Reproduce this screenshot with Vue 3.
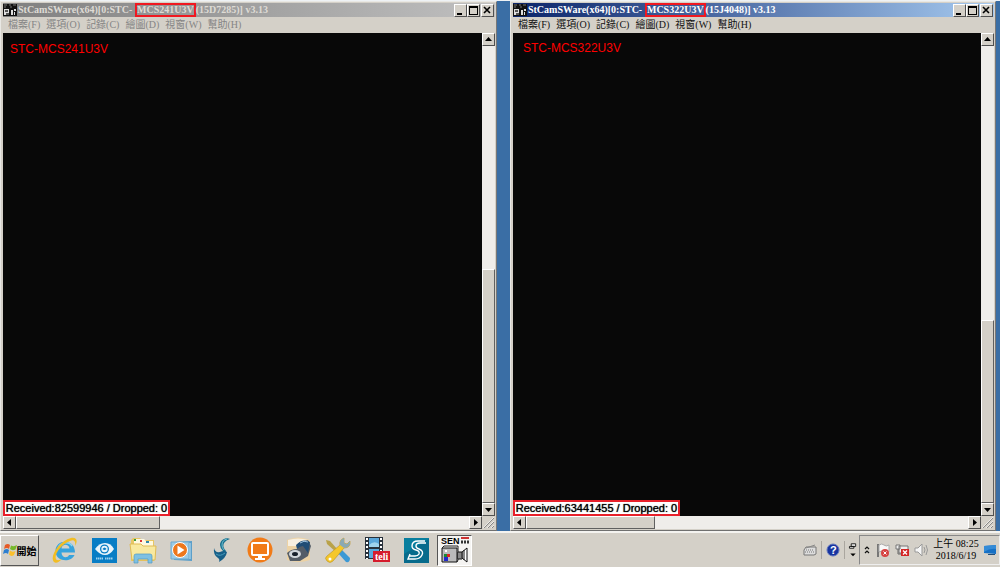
<script setup>
const menus = ['檔案(F)', '選項(O)', '記錄(C)', '繪圖(D)', '視窗(W)', '幫助(H)']
const windows = [
  { id: 'a', active: false, model: 'MCS241U3V', serial: '15D7285', received: '82599946', vTop: 48.8, hWidth: 31.8 },
  { id: 'b', active: true, model: 'MCS322U3V', serial: '15J4048', received: '63441455', vTop: 60, hWidth: 29.3 },
]
</script>

<template>
  <div class="screen">
    <main class="desktop">
      <section v-for="w in windows" :key="w.id" class="window" :class="[w.id, { active: w.active }]">
        <header class="titlebar">
          <svg class="app-icon" viewBox="0 0 14 12" aria-hidden="true">
            <path d="M0 0h14v12H0z" fill="#111" />
            <path d="M1 1h3M6 1h2M10 1h3M1 3h2M7 3h2" stroke="#777" />
            <path d="M1 5h5v6H1zM8 6h2v5H8zM11 5h2v2h-2zM11 8h1v3h-1z" fill="#ddd" />
            <path d="M2 6h3v2H2zM3 9h3v2H3z" fill="#555" />
          </svg>
          <h1 class="title"><span class="lead">StCamSWare(x64)[0:STC-</span><span class="mark">{{ w.model }}</span><span>({{ w.serial }})] v3.13</span></h1>
          <div class="controls">
            <button class="key" aria-label="Minimize"><svg viewBox="0 0 9 9"><path d="M1 7h5v2H1z" /></svg></button>
            <button class="key" aria-label="Maximize"><svg viewBox="0 0 9 9"><path d="M0 0h9v9H0zM1 2v6h7V2z" fill-rule="evenodd" /></svg></button>
            <button class="key close" aria-label="Close"><svg viewBox="0 0 9 9"><path d="M1 1l6 6M7 1L1 7" stroke="#000" stroke-width="1.6" /></svg></button>
          </div>
        </header>
        <nav class="menubar">
          <button v-for="m in menus" :key="m">{{ m }}</button>
        </nav>
        <div class="body">
          <div class="view">
            <p class="camera">STC-{{ w.model }}</p>
            <p class="status">Received:{{ w.received }} / Dropped: 0</p>
          </div>
          <div class="vbar">
            <button class="key" aria-label="Scroll up"><svg viewBox="0 0 9 9"><path d="M1 6l3.5-4L8 6z" /></svg></button>
            <div class="track"><div class="thumb" :style="{ marginTop: 'auto', height: 100 - w.vTop + '%' }"></div></div>
            <button class="key" aria-label="Scroll down"><svg viewBox="0 0 9 9"><path d="M1 3l3.5 4L8 3z" /></svg></button>
          </div>
          <div class="hbar">
            <button class="key" aria-label="Scroll left"><svg viewBox="0 0 9 9"><path d="M6 1L2 4.500L6 8z" /></svg></button>
            <div class="track"><div class="thumb" :style="{ width: w.hWidth + '%' }"></div></div>
            <button class="key" aria-label="Scroll right"><svg viewBox="0 0 9 9"><path d="M3 1l4 3.500L3 8z" /></svg></button>
          </div>
          <svg class="grip" viewBox="0 0 13 13" aria-hidden="true">
            <path d="M2 12L12 2M6 12l6-6M10 12l2-2" stroke="#888" />
            <path d="M1 12L12 1M5 12l7-7M9 12l3-3" stroke="#fff" stroke-width=".6" />
          </svg>
        </div>
      </section>
    </main>

    <footer class="taskbar">
      <button class="start">
        <svg viewBox="0 0 14 14" aria-hidden="true">
          <path d="M2 2q3-2 5 0L6 6Q4 4 1 6z" fill="#e65b27" />
          <path d="M8 2.500q3 1.500 6-.5l-1.500 4.500Q9 8 7 6z" fill="#76b82a" />
          <path d="M1 7q3-2 5 0l-1 4Q3 9 0 11z" fill="#2d7fd0" />
          <path d="M7 7.500q2 2 5.500.5L11 12q-3 2-5-.5z" fill="#fbc02d" />
        </svg>開始
      </button>
      <div class="apps">
        <button aria-label="Internet Explorer">
          <svg viewBox="0 0 28 28">
            <path fill-rule="evenodd" d="M23.500 19C20 27 4.500 26 4.500 15 4.500 3 24 2 24 16.500H10.500c0 5.500 6 6 7.500 2.500zM10.500 12.500h8c-.5-5-7.500-5-8 0z" fill="#36a3dd" />
            <path d="M7 12c2-6 11-7 14-2" fill="none" stroke="#8bd6f5" stroke-width="1.500" />
            <path d="M3 26C-2 21 8 5 20 2c6-1 7 3 4 8 1-5-1-7-5-5C9 9 3 19 5 23c1 2 4 1 6 0-3 3-6 5-8 3z" fill="#f2bd23" />
          </svg>
        </button>
        <button aria-label="Eye viewer">
          <svg viewBox="0 0 28 28">
            <path d="M2 2h25v25H2z" fill="#087dc5" />
            <path d="M5 13Q9 7 15 7t9 6q-4 6-9 6t-10-6z" fill="#eaf5fb" />
            <circle cx="14.500" cy="13" r="4.500" fill="#087dc5" />
            <circle cx="14.500" cy="13" r="3.200" fill="#eaf5fb" />
            <path d="M12.500 13q2-3 4 0-2 2-4 0z" fill="#087dc5" />
            <path d="M6 22.500h7M15 22.500h8" stroke="#9ed2ee" stroke-width="2" stroke-dasharray="1.500 .5" />
          </svg>
        </button>
        <button aria-label="File Explorer">
          <svg viewBox="0 0 28 28">
            <path d="M2 4l2-2h7l2 2h12v21H2z" fill="#e8c765" />
            <path d="M5 3h10l2 2h7v5H5z" fill="#fff9df" />
            <path d="M5 4h2" stroke="#3a9d3a" stroke-width="2" /><path d="M11 5h2" stroke="#d33" stroke-width="2" /><path d="M17 6h3" stroke="#38a" stroke-width="2" />
            <path d="M1 8h11l2 2h13l-1 14H3z" fill="#f8e9a0" stroke="#e0bb54" />
            <path d="M5 27v-7q0-2 2-2h14q2 0 2 2v7h-4v-4H9v4z" fill="#7fc1e2" stroke="#519bc6" stroke-width=".7" />
          </svg>
        </button>
        <button aria-label="Media Player">
          <svg viewBox="0 0 28 28">
            <path d="M6 6l18-1v20l-18-1z" fill="#5c9fc9" /><path d="M3 6h18v17H3z" fill="#9bcbe6" stroke="#6fa9ce" />
            <path d="M22 7v16" stroke="#bfe2f3" />
            <circle cx="12" cy="14" r="7.500" fill="#ed771c" stroke="#fff" />
            <path d="M9.500 9.500v9l7-4.500z" fill="#fff" />
          </svg>
        </button>
        <button aria-label="Bird">
          <svg viewBox="0 0 28 28">
            <path d="M23 3C19 1 13 4 13 9q0 3 3 6 2 3 3 0-4-4-2-8 2-3 6-4z" fill="#17708f" />
            <path d="M7 12q1 5 6 4 4-2 7 0-1 6-8 10 1-3-1-4-5-3-4-10z" fill="#175f88" />
            <path d="M20 3q-5 1-5 6 0 3 2 5" fill="none" stroke="#6fbccd" />
            <path d="M9 18q4 3 9-1" fill="none" stroke="#489bbb" />
          </svg>
        </button>
        <button aria-label="Remote desktop">
          <svg viewBox="0 0 28 28">
            <circle cx="14" cy="14" r="12.500" fill="#f17b18" />
            <rect x="6" y="7" width="16" height="12" rx="1" fill="none" stroke="#fff" stroke-width="2" />
            <path d="M12 19h4v3h3v2H9v-2h3z" fill="#fff" />
          </svg>
        </button>
        <button aria-label="Camera tool">
          <svg viewBox="0 0 28 28">
            <path d="M2 4q11-5 23 0v20q-11 4-23 0z" fill="#ecd2a4" /><path d="M3 4q10-3 20 0v6H3z" fill="#f7efe0" />
            <path d="M2 17q4-4 10-4l3-6 8-3 3 6-3 10-8 5-10 0z" fill="#555d66" />
            <path d="M11 9q7-7 14-3l-2 11-5-7q-3 0-6 3z" fill="#214d75" />
            <ellipse cx="10" cy="18" rx="6" ry="4" fill="#d2d7dc" /><ellipse cx="10" cy="18" rx="3" ry="2" fill="#17202b" />
            <path d="M15 7q4-3 8-1" stroke="#9dc1dd" fill="none" />
          </svg>
        </button>
        <button aria-label="Settings tools">
          <svg viewBox="0 0 28 28">
            <path d="M2 4l4 1 8 9-2 2-9-8z" fill="#b9a24a" />
            <path d="M14 14l3-1 9 9q0 5-4 4l-8-9z" fill="#3b99d5" />
            <path d="M16 9q-1-5 4-7v5l3 1 3-3q1 7-6 7L9 25q-3 3-6 0t0-5z" fill="#f5c72b" stroke="#ba9225" stroke-width=".6" />
            <path d="M16 9q-1-5 4-7v5l3 1 3-3q1 7-6 7z" fill="#8ba9b3" /><circle cx="6" cy="23" r="1.500" fill="#fff" />
          </svg>
        </button>
        <button aria-label="Teli viewer">
          <svg viewBox="0 0 28 28">
            <path d="M2 1h18v22H2z" fill="#28313b" /><path d="M6 2h10v9H6zM6 13h10v9H6z" fill="#5ba7da" />
            <path d="M6 9q5-5 10-1v3H6z" fill="#9fd3ed" />
            <path d="M4 2v21M18 2v21" stroke="#fff" stroke-width="2" stroke-dasharray="2 2" />
            <path d="M10 15h17v11H10z" fill="#d51c2c" />
            <text x="12" y="24" class="teli">teli</text>
          </svg>
        </button>
        <button aria-label="S viewer">
          <svg viewBox="0 0 28 28">
            <path d="M2 2h25v25H2z" fill="#087e9e" /><path d="M2 18L27 3v24H2z" fill="#076b8c" />
            <path d="M23 5h-7q-6 0-6 5 0 3 4 4 4 1 3 4-1 2-4 2H7M24 7h-6q-4 0-4 3 0 2 3 3 5 2 3 6-2 4-7 4H6l2-5" fill="none" stroke="#fff" stroke-width="1.400" />
          </svg>
        </button>
        <button class="current" aria-label="SENTECH StCamSWare">
          <svg viewBox="0 0 28 28">
            <text x="0" y="8" class="sen">SEN</text>
            <path d="M20 2h8" stroke="#c33" stroke-width="2" /><path d="M20 6h8" stroke="#333" stroke-width="3" stroke-dasharray="2 1" />
            <path d="M1 12h15v14H1z" fill="#bbb" stroke="#111" /><path d="M1 12l2-2h14v14l-1 2" fill="none" stroke="#222" />
            <path d="M4 14h2v2H4z" fill="#fff" /><path d="M3 18h3v3H3z" fill="#198a37" /><path d="M6 18h3v3H6z" fill="#d22" /><path d="M3 21h4v4H3z" fill="#222bca" />
            <path d="M17 16h4v7h-4zM21 16l5-4v14l-5-4z" fill="#fff" stroke="#111" /><path d="M19 16v7M23 14v10" stroke="#111" />
          </svg>
        </button>
      </div>
      <div class="language">
        <button aria-label="Keyboard"><svg viewBox="0 0 16 16"><path d="M2 8l2-3h10v7l-2 1H2z" fill="#ddd" stroke="#777" /><path d="M4 8h8M3 10h9" stroke="#777" stroke-dasharray="1 1" /><path d="M4 6L13 3" stroke="#888" /></svg></button>
        <i class="sep"></i>
        <button aria-label="Help"><svg viewBox="0 0 16 16"><circle cx="8" cy="8" r="6" fill="#1734a0" stroke="#6175bd" /><text x="5" y="12" class="question">?</text></svg></button>
        <i class="sep"></i>
        <button class="narrow" aria-label="Language bar options"><svg viewBox="0 0 10 18"><path d="M3 2h5v3H3zM1 5h5v2H1z" fill="#eee" stroke="#111" /><path d="M2 13h6l-3 3z" /></svg></button>
      </div>
      <div class="tray">
        <button class="narrow" aria-label="Show hidden icons"><svg viewBox="0 0 10 12"><path d="M3 5l2-2 2 2M3 9l2-2 2 2" fill="none" stroke="#111" stroke-width="1.200" /></svg></button>
        <button aria-label="Action Center"><svg viewBox="0 0 16 16"><path d="M3 2v13" stroke="#777" stroke-width="2" /><path d="M4 3q3-2 5 0t5 0v7q-3 2-5 0t-5 0z" fill="#f8f8f8" stroke="#aaa" /><circle cx="10" cy="11" r="4" fill="#d64443" /><path d="M8.500 9.500l3 3m0-3l-3 3" stroke="#fff" /></svg></button>
        <button aria-label="Network"><svg viewBox="0 0 16 16"><path d="M2 3h4v4H2zM5 4h9v7H5z" fill="#eee" stroke="#777" /><path d="M4 7v5h6" fill="none" stroke="#666" /><path d="M7 7h8v7H7z" fill="#d32626" /><path d="M9 8.500l4 4m0-4l-4 4" stroke="#fff" stroke-width="1.300" /></svg></button>
        <button aria-label="Volume"><svg viewBox="0 0 16 16"><path d="M2 6h3l4-4v12L5 10H2z" fill="#f6f6f6" stroke="#999" /><path d="M11 5q2 3 0 6M13 3q3 5 0 10" fill="none" stroke="#999" /></svg></button>
        <time class="clock" datetime="2018-06-19T08:25"><span>上午 08:25</span><span>2018/6/19</span></time>
        <button class="show" aria-label="Show desktop"><svg viewBox="0 0 14 12"><path d="M1 2l12-1v9L1 9z" fill="#1670c5" /><path d="M1 2l12-1v4Q7 4 1 8z" fill="#348bd7" /><path d="M5 10h7v1H5z" fill="#234e78" /></svg></button>
      </div>
    </footer>
  </div>
</template>

<style>
html, body { height: 100%; }
body { margin: 0; overflow: hidden; }
</style>

<style scoped>
* { box-sizing: border-box; }
button { font: inherit; color: inherit; padding: 0; border: 0; background: none; }
svg { display: block; }
h1, p { margin: 0; }

.screen {
  display: flex;
  flex-direction: column;
  height: 100vh;
  background: #3a6ea5;
  color: #000;
  font-family: "Liberation Serif", "Noto Sans CJK TC", serif;
}
.desktop { flex: 1; min-height: 0; display: flex; gap: 13px; padding-right: 4px; border-top: 1px solid #eef2f5; }
.window {
  display: flex;
  flex-direction: column;
  min-width: 0;
  padding: 1px 1px 1px 2px;
  background: #d4d0c8;
  border: solid #e9e8e4;
  border-width: 1px;
  border-right-color: #777;
  border-bottom-color: #707070;
}
.a { flex: 497; }
.b { flex: 486; }

.titlebar { display: flex; align-items: center; height: 14px; padding-right: 1px; background: linear-gradient(90deg, #808080, #c0c0c0); color: #dedbd5; }
.active .titlebar { background: linear-gradient(90deg, #0a246a, #a6caf0); color: #fff; }
.app-icon { width: 14px; height: 12px; margin-right: 1px; }
.title { flex: 1; display: flex; align-items: center; font-size: 10px; line-height: 12px; font-weight: 700; white-space: nowrap; }
.lead { min-width: 117px; }
.mark { min-width: 60px; height: 14px; text-align: center; border: 2px solid #f01820; line-height: 10px; }
.controls { display: flex; }
.key {
  flex: none;
  display: grid;
  place-items: center;
  width: 13px;
  height: 13px;
  background: #d4d0c8;
  border: 1px solid;
  border-color: #fff #505050 #505050 #fff;
}
.key svg { width: 9px; height: 9px; }
.close { margin-left: 1px; }

.menubar { display: flex; align-items: center; gap: 6px; height: 16px; padding-left: 5px; font-size: 10px; line-height: 16px; color: #858585; }
.menubar button { white-space: nowrap; }
.active .menubar { color: #111; }

.body { flex: 1; min-height: 0; display: grid; grid-template: minmax(0, 1fr) 13px / minmax(0, 1fr) 13px; }
.view {
  display: flex;
  flex-direction: column;
  justify-content: space-between;
  align-items: flex-start;
  background: #080808;
  font-family: "Liberation Sans", sans-serif;
}
.camera { padding: 8px 0 0 7px; font-size: 12px; line-height: 16px; color: #f00; }
.b .camera { padding: 7px 0 0 10px; }
.status { min-width: 167px; padding: 1px 0 0; background: #fff; border: 2px solid #e8202a; font-size: 11px; line-height: 11px; text-align: center; white-space: nowrap; text-shadow: 0 0 1px #000; }
.vbar, .hbar { display: flex; min-width: 0; min-height: 0; }
.vbar { flex-direction: column; }
.track { flex: 1; min-width: 0; min-height: 0; display: flex; background: #efedea; }
.vbar .track { flex-direction: column; }
.thumb { background: #d4d0c8; border: 1px solid; border-color: #fff #606060 #606060 #fff; }
.grip { width: 13px; height: 13px; }

.taskbar { display: flex; align-items: center; height: 36px; background: #d4d0c8; border-top: 2px solid #f4f3f0; }
.start {
  display: flex;
  align-items: center;
  justify-content: center;
  width: 39px;
  height: 31px;
  font-family: "Noto Sans CJK TC", sans-serif;
  font-size: 10px;
  font-weight: 700;
  white-space: nowrap;
  border: 1px solid;
  border-color: #fff #555 #555 #fff;
}
.start svg { width: 14px; height: 14px; flex: none; }
.apps { display: flex; padding-left: 6px; }
.apps button { display: grid; place-items: center; width: 39px; height: 31px; }
.apps svg { width: 28px; height: 28px; }
.apps .current { width: 35px; margin-left: 2px; background: #f5f4f2; border: 1px solid; border-color: #555 #fff #fff #555; }
.teli { font: 700 10px "Liberation Serif", serif; fill: #fff; }
.sen { font: 700 9px "Liberation Sans", sans-serif; fill: #000; }
.question { font: 700 11px "Liberation Sans", sans-serif; fill: #fff; }
.language { display: flex; align-items: center; gap: 3px; margin-left: auto; }
.language svg, .tray svg { width: 16px; height: 16px; }
.language .narrow svg, .tray .narrow svg { width: 10px; }
.sep { width: 1px; height: 18px; background: #aaa69f; }
.tray {
  display: flex;
  align-items: center;
  gap: 3px;
  height: 30px;
  padding: 0 2px;
  margin-left: 1px;
  border: 1px solid;
  border-color: #888 #eee #eee #888;
}
.clock { display: flex; flex-direction: column; align-items: center; width: 48px; font-size: 10px; line-height: 12px; white-space: nowrap; }
.tray .show svg { width: 14px; height: 12px; }
</style>
